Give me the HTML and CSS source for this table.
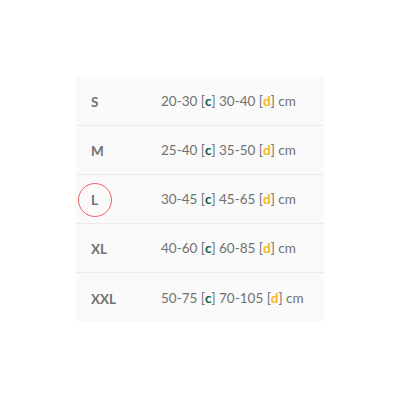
FILE: index.html
```html
<!DOCTYPE html>
<html>
<head>
<meta charset="utf-8">
<link rel="stylesheet" href="styles.css">
</head>
<body>
<div class="page">
  <div class="sizes">
    <div class="row"><span class="label">S</span><span class="value">20-30 [<b class="c">c</b>] 30-40 [<b class="d">d</b>] cm</span></div>
    <div class="row"><span class="label">M</span><span class="value">25-40 [<b class="c">c</b>] 35-50 [<b class="d">d</b>] cm</span></div>
    <div class="row"><span class="label"><span class="ring">L</span></span><span class="value">30-45 [<b class="c">c</b>] 45-65 [<b class="d">d</b>] cm</span></div>
    <div class="row"><span class="label">XL</span><span class="value">40-60 [<b class="c">c</b>] 60-85 [<b class="d">d</b>] cm</span></div>
    <div class="row"><span class="label">XXL</span><span class="value">50-75 [<b class="c">c</b>] 70-105 [<b class="d">d</b>] cm</span></div>
  </div>
</div>
</body>
</html>
```
FILE: styles.css
```css
html, body { margin: 0; padding: 0; background: #fff; }
.page {
  width: 400px;
  height: 400px;
  padding: 77px 0 0 76px;
  box-sizing: border-box;
  font-family: Lato, "Liberation Sans", sans-serif;
}
.sizes {
  width: 248px;
  background: #fafafa;
}
.row {
  display: flex;
  align-items: center;
  height: 48px;
  border-bottom: 1px solid #ebebeb;
  font-size: 13.5px;
  color: #717171;
}
.row:last-child { border-bottom: none; height: 49px; }
.label {
  width: 85px;
  padding-left: 15px;
  box-sizing: border-box;
  font-weight: bold;
  padding-top: 2px;
}
.ring {
  position: relative;
}
.ring::before {
  content: "";
  position: absolute;
  left: -13px;
  top: -9px;
  width: 32px;
  height: 32px;
  border: 1.5px solid #f06464;
  border-radius: 50%;
}
.value b { font-weight: bold; }
.c { color: #0d5c44; }
.d { color: #f5b821; }
```
